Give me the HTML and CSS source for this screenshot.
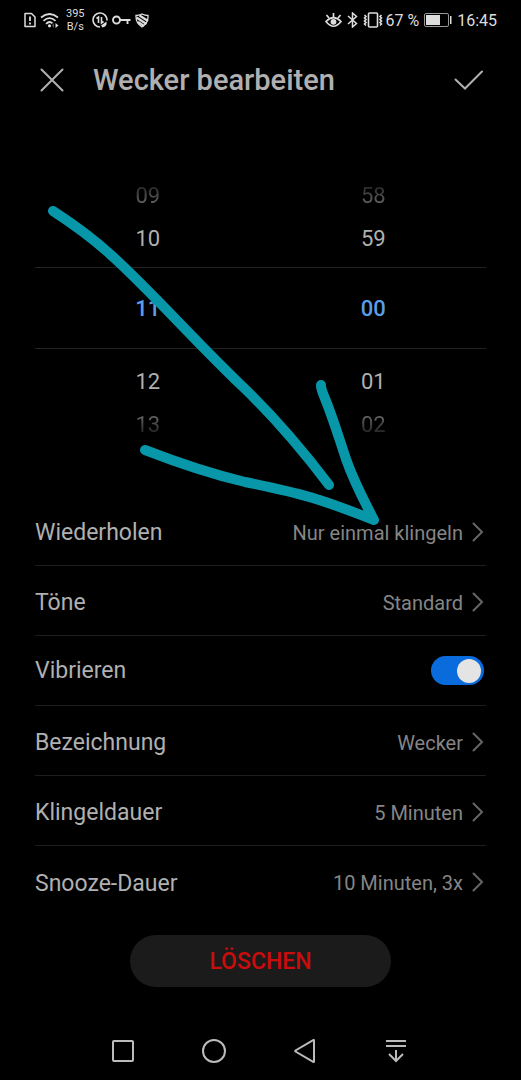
FILE: index.html
```
<!DOCTYPE html>
<html lang="de">
<head>
    <meta charset="UTF-8">
    <meta name="viewport" content="width=device-width, initial-scale=1.0">
    <title>Wecker bearbeiten</title>
    <link rel="stylesheet" href="styles.css">
</head>
<body>
    <div class="status">
        <div class="status-left">
            <svg width="12" height="16" viewBox="0 0 12 16" fill="none" stroke="#ddd" stroke-width="1.5">
                <path d="M1 1.5h6.5L11 5v9.5H1z" stroke-linejoin="round"/>
                <path d="M6 4.5v4.5M6 10.5v2" stroke-width="1.8"/>
            </svg>
            <svg width="19" height="16" viewBox="0 0 19 16" fill="none" stroke="#ddd" stroke-width="1.7">
                <path d="M1 5.5Q9.500-1.500 18 5.500M3.500 8.800Q9.500 3.500 15.500 8.800M6 11.800Q9.500 8.500 12.500 11.300"/>
                <circle cx="9.500" cy="13.800" r="1.600" fill="#ddd" stroke="none"/>
                <path d="M15.500 11v5l3-2.500z" fill="#ddd" stroke="none"/>
                <path d="M14 11v5l-2-2.500z" fill="#555" stroke="none"/>
            </svg>
            <div class="speed">395<br>B/s</div>
            <svg width="16" height="16" viewBox="0 0 16 16" fill="none" stroke="#ddd" stroke-width="1.6">
                <path d="M15 8.500A7 7 0 1 0 8 15"/>
                <path d="M4.500 6.500L6.500 5v6M9.500 5v6l2-1.500"/>
                <path d="M9 13.500L14.500 9.500Q15.500 14.500 10.500 15.500z" fill="#ddd" stroke="none"/>
            </svg>
            <svg width="19" height="10" viewBox="0 0 19 10" fill="none" stroke="#ddd" stroke-width="1.900">
                <circle cx="4.500" cy="5" r="3.500"/>
                <path d="M8 5h10.500M15.500 5v4"/>
            </svg>
            <svg width="14" height="15" viewBox="0 0 14 15" fill="none" stroke="#ddd" stroke-width="1.300">
                <path d="M7 1Q4 2.500 1 2.500Q.5 10 7 14Q13.500 10 13 2.500Q10 2.500 7 1z"/>
                <path d="M1.500 4.500l10 6.500M4.500 2.500l8.500 5.500M3 9l6 4" stroke-width="2.200"/>
            </svg>
        </div>
        <div class="status-right">
            <svg width="17" height="15" viewBox="0 0 17 15" fill="none" stroke="#ddd" stroke-width="1.700">
                <path d="M1 8.500Q8.500 1 16 8.500Q8.500 18 1 8.500z"/>
                <circle cx="8.500" cy="8.800" r="2.900" fill="#ddd" stroke="none"/>
                <path d="M8.500 0v4M1.500 2l2.500 3M15.500 2L13 5"/>
            </svg>
            <svg width="11" height="16" viewBox="0 0 11 16" fill="none" stroke="#ddd" stroke-width="1.500">
                <path d="M1 4l8.500 7.500L5.500 15V1l4 3.500L1 12"/>
            </svg>
            <svg width="20" height="16" viewBox="0 0 20 16" fill="none" stroke="#ddd" stroke-width="1.600">
                <rect x="5.500" y="1" width="9" height="14" rx="1"/>
                <path d="M1.500 3l1.500 1.500L1.500 6 3 7.500 1.500 9 3 10.500 1.500 12 3 13.500M18.500 3L17 4.500 18.500 6 17 7.500 18.500 9 17 10.500 18.500 12 17 13.500"/>
            </svg>
            <span class="percent">67 %</span>
            <svg width="28" height="14" viewBox="0 0 28 14">
                <rect x="0.500" y="0.500" width="24" height="13" rx="1.500" fill="none" stroke="#999"/>
                <path d="M2 2h14v10H2z" fill="#ddd"/>
                <path d="M26 3h1.500v8H26z" fill="#ddd"/>
            </svg>
            <span>16:45</span>
        </div>
    </div>

    <header class="header">
        <button type="button" class="icon-button" aria-label="Abbrechen">
            <svg width="24" height="24" viewBox="0 0 24 24" fill="none" stroke="#b0b0b0" stroke-width="2" stroke-linecap="round">
                <path d="M1.500 1.500l21 21M22.500 1.500l-21 21"/>
            </svg>
        </button>
        <h1>Wecker bearbeiten</h1>
        <button type="button" class="icon-button" aria-label="Speichern">
            <svg width="30" height="20" viewBox="0 0 30 20" fill="none" stroke="#b0b0b0" stroke-width="2" stroke-linecap="round">
                <path d="M1.500 9.500l9.500 9L28 1.500"/>
            </svg>
        </button>
    </header>

    <main class="content">
        <div class="picker">
            <ul class="wheel">
                <li class="first">09</li>
                <li>10</li>
                <li class="selected">11</li>
                <li>12</li>
                <li class="last">13</li>
            </ul>
            <ul class="wheel">
                <li class="first">58</li>
                <li>59</li>
                <li class="selected">00</li>
                <li>01</li>
                <li class="last">02</li>
            </ul>
        </div>

        <div class="settings">
            <a class="row" href="#">
                <span class="label">Wiederholen</span>
                <span class="value">Nur einmal klingeln</span>
                <svg class="chevron" viewBox="0 0 12 20"><path d="M1.500 1.500L10 10l-8.500 8.500"/></svg>
            </a>
            <a class="row" href="#">
                <span class="label">Töne</span>
                <span class="value">Standard</span>
                <svg class="chevron" viewBox="0 0 12 20"><path d="M1.500 1.500L10 10l-8.500 8.500"/></svg>
            </a>
            <div class="row row-switch">
                <label class="label" for="vibrate">Vibrieren</label>
                <input type="checkbox" class="switch" id="vibrate" checked>
            </div>
            <a class="row" href="#">
                <span class="label">Bezeichnung</span>
                <span class="value">Wecker</span>
                <svg class="chevron" viewBox="0 0 12 20"><path d="M1.500 1.500L10 10l-8.500 8.500"/></svg>
            </a>
            <a class="row" href="#">
                <span class="label">Klingeldauer</span>
                <span class="value">5 Minuten</span>
                <svg class="chevron" viewBox="0 0 12 20"><path d="M1.500 1.500L10 10l-8.500 8.500"/></svg>
            </a>
            <a class="row" href="#">
                <span class="label">Snooze-Dauer</span>
                <span class="value">10 Minuten, 3x</span>
                <svg class="chevron" viewBox="0 0 12 20"><path d="M1.500 1.500L10 10l-8.500 8.500"/></svg>
            </a>
        </div>

        <button type="button" class="delete">LÖSCHEN</button>
    </main>

    <nav class="navbar">
        <button type="button" aria-label="Übersicht">
            <svg width="24" height="24" viewBox="0 0 24 24"><rect x="2" y="2" width="20" height="20" rx="1"/></svg>
        </button>
        <button type="button" aria-label="Start">
            <svg width="24" height="24" viewBox="0 0 24 24"><circle cx="12" cy="12" r="11"/></svg>
        </button>
        <button type="button" aria-label="Zurück">
            <svg width="24" height="24" viewBox="0 0 24 24"><path d="M21 1.500v21q0 .8-.8.400L2.500 12.500q-.6-.5 0-1L20.200 1.100q.8-.4.800.4z"/></svg>
        </button>
        <button type="button" aria-label="Benachrichtigungen">
            <svg width="24" height="24" viewBox="0 0 24 24"><path d="M2 2h20M2 7h20M12 11v11M5 15l7 7 7-7"/></svg>
        </button>
    </nav>

    <!-- Pfeil auf "Wiederholen" -->
    <svg class="arrow" width="521" height="560" viewBox="0 0 521 560" aria-hidden="true">
        <path d="M53 211Q87 233 111 255C150 290 190 336 242 386Q285 427 329 485"/>
        <path d="M145 450Q199 471 245 482C305 494 320 499 374 520Q354 482 346 459C336 429 333 418 324 396Q321 389 321 385"/>
    </svg>
</body>
</html>
```
FILE: styles.css
```
* {
    box-sizing: border-box;
}
body {
    position: relative;
    margin: 0;
    background-color: #000;
    color: #b0b0b0;
    font-family: Roboto, "Liberation Sans", sans-serif;
    font-size: 23px;
}
svg {
    display: block;
    flex-shrink: 0;
}
button {
    padding: 0;
    border: none;
    background: none;
    font-family: inherit;
    cursor: pointer;
}
.status {
    display: flex;
    justify-content: space-between;
    align-items: center;
    height: 40px;
    padding: 0 24px;
    color: #ddd;
    font-size: 16px;
}
.status-left, .status-right {
    display: flex;
    align-items: center;
    gap: 5px;
}
.status-left {
    gap: 4px;
}
.speed {
    margin: 0 3px;
    font-size: 11px;
    line-height: 13px;
    text-align: center;
}
.percent {
    margin-left: -3px;
}
.header {
    display: flex;
    align-items: center;
    height: 80px;
    padding: 0 37px 0 40px;
}
.header h1 {
    flex: 1;
    margin: 0 0 0 29px;
    font-size: 29px;
    font-weight: 500;
}
.content {
    padding: 54px 35px 0;
}
.picker {
    display: flex;
}
.wheel {
    flex: 1;
    margin: 0;
    padding: 0;
    list-style: none;
    text-align: center;
    font-size: 22px;
    line-height: 43px;
}
.wheel .selected {
    height: 82px;
    margin: 7px 0 11px;
    border: 1px solid #222;
    border-width: 1px 0;
    color: #5a9ee6;
    font-weight: 500;
    line-height: 82px;
}
.wheel .first, .wheel .last {
    color: transparent;
    background: linear-gradient(#2a2a2a 30%, #666 70%);
    -webkit-background-clip: text;
    background-clip: text;
}
.wheel .last {
    background-image: linear-gradient(#666 30%, #1c1c1c 75%);
}
.settings {
    margin-top: 50px;
}
.row {
    display: flex;
    align-items: center;
    height: 70px;
    padding-top: 4px;
    border-bottom: 1px solid #1e1e1e;
    color: inherit;
    text-decoration: none;
}
.row:last-child {
    border-bottom: none;
}
.row-switch {
    padding: 0 2px 0 0;
}
.label {
    flex: 1;
}
.value {
    color: #858585;
    font-size: 20px;
}
.chevron {
    width: 12px;
    height: 20px;
    margin: 0 2px 2px 9px;
    fill: none;
    stroke: #666;
    stroke-width: 2;
    stroke-linecap: round;
}
.switch {
    display: flex;
    align-items: center;
    justify-content: flex-end;
    appearance: none;
    width: 53px;
    height: 29px;
    margin: 0;
    padding: 0 3px;
    border-radius: 15px;
    background-color: #0a6bdc;
    cursor: pointer;
}
.switch::before {
    content: "";
    width: 24px;
    height: 24px;
    border-radius: 50%;
    background-color: #e4e4e4;
}
.switch:not(:checked) {
    justify-content: flex-start;
    background-color: #444;
}
.delete {
    display: block;
    width: 58%;
    height: 52px;
    margin: 19px auto 0;
    border-radius: 26px;
    background-color: #1b1b1b;
    color: #c90c0c;
    font-size: 23px;
    font-weight: 500;
}
.navbar {
    display: flex;
    justify-content: center;
    gap: 67px;
    padding: 52px 2px 16px 0;
}
.navbar svg {
    fill: none;
    stroke: #bbb;
    stroke-width: 2;
}
.arrow {
    position: absolute;
    top: 0;
    left: 0;
    fill: none;
    stroke: #0797a8;
    stroke-width: 10;
    stroke-linecap: round;
    stroke-linejoin: round;
    pointer-events: none;
}
```
